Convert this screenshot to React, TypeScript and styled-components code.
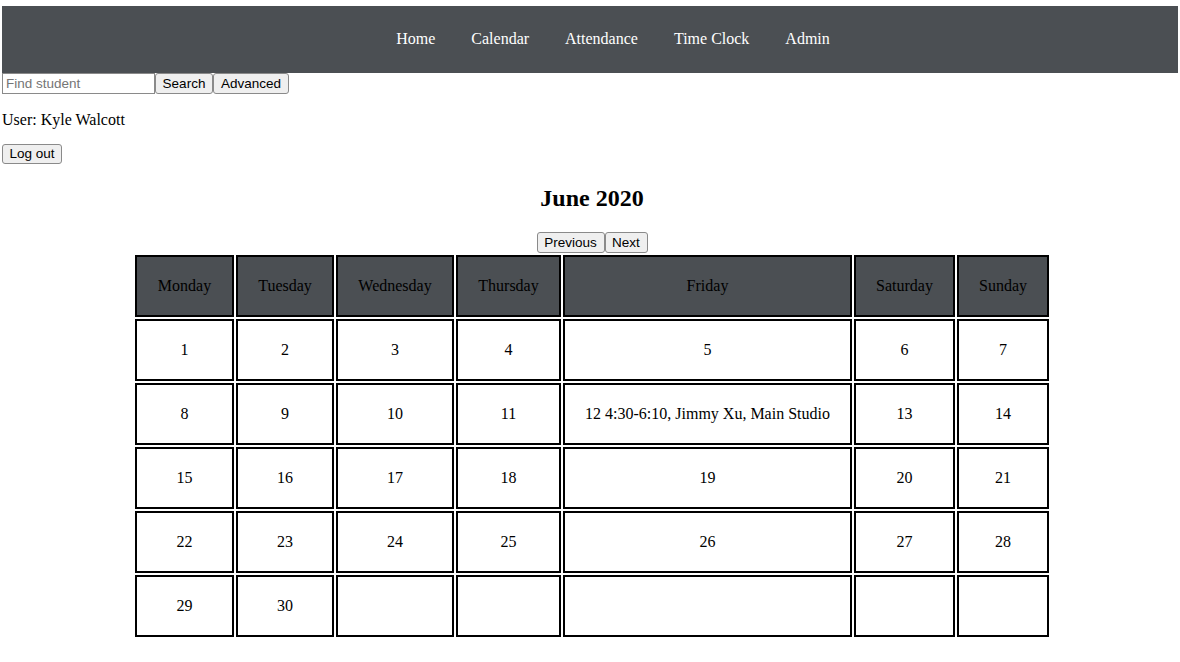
import React from "react";
import styled, { createGlobalStyle } from "styled-components";

const Global = createGlobalStyle`
  html, body { margin: 0; padding: 0; background: #fff; }
  body {
    padding: 6px 2px 0 2px;
    font-family: "Liberation Serif", "Times New Roman", serif;
    font-size: 16px;
    color: #000;
  }
`;

const Nav = styled.nav`
  background: #4b4f53;
  height: 67px;
  box-sizing: border-box;
  padding-bottom: 2px;
  display: flex;
  align-items: center;
`;

const NavList = styled.ul`
  list-style: none;
  margin: 0;
  padding: 0 0 0 46px;
  width: 100%;
  display: flex;
  justify-content: center;
`;

const NavItem = styled.li`
  padding: 0 18px;
  color: #fff;
  font-size: 16px;
  line-height: 18px;
`;

const SearchRow = styled.div`
  display: flex;
  height: 21px;
`;

const Field = styled.input`
  box-sizing: border-box;
  width: 153px;
  height: 21px;
  margin: 0;
  padding: 1px 3px;
  border: 1px solid #8a8a8a;
  border-radius: 0;
  font-family: "Liberation Sans", Arial, sans-serif;
  font-size: 13.5px;
  color: #000;
  &::placeholder { color: #757575; }
`;

const Btn = styled.button<{ $w: number; $h?: number }>`
  box-sizing: border-box;
  width: ${(p) => p.$w}px;
  height: ${(p) => p.$h ?? 21}px;
  margin: 0;
  padding: 0 5px;
  background: #efefef;
  border: 1px solid #8a8a8a;
  border-radius: 3px;
  font-family: "Liberation Sans", Arial, sans-serif;
  font-size: 13.5px;
  color: #000;
  line-height: 1;
`;

const UserLine = styled.p`
  margin: 16px 0 15px;
  line-height: 19px;
`;

const LogoutWrap = styled.div`
  height: 20px;
  display: flex;
`;

const Main = styled.section`
  padding-left: 4px;
`;

const Title = styled.h2`
  margin: 20px 0;
  padding-top: 1px;
  font-size: 24px;
  line-height: 27px;
  font-weight: bold;
  text-align: center;
`;

const Pager = styled.div`
  display: flex;
  justify-content: center;
  height: 21px;
`;

const Grid = styled.div`
  width: 914px;
  margin: 0 auto;
  padding: 2px;
  display: grid;
  grid-template-columns: 99px 98px 118px 105px 289px 101px 92px;
  grid-auto-rows: 62px;
  gap: 2px;
`;

const Cell = styled.div<{ $head?: boolean }>`
  box-sizing: border-box;
  border: 2px solid #000;
  background: ${(p) => (p.$head ? "#4b4f53" : "#fff")};
  display: flex;
  align-items: center;
  justify-content: center;
  text-align: center;
  font-size: 16px;
  color: #000;
  white-space: nowrap;
`;

const days = ["Monday", "Tuesday", "Wednesday", "Thursday", "Friday", "Saturday", "Sunday"];

const cells: string[] = [];
for (let i = 1; i <= 35; i++) {
  if (i === 12) cells.push("12 4:30-6:10, Jimmy Xu, Main Studio");
  else if (i <= 30) cells.push(String(i));
  else cells.push("");
}

export default function App() {
  return (
    <>
      <Global />
      <Nav>
        <NavList>
          {["Home", "Calendar", "Attendance", "Time Clock", "Admin"].map((l) => (
            <NavItem key={l}>{l}</NavItem>
          ))}
        </NavList>
      </Nav>
      <SearchRow>
        <Field placeholder="Find student" />
        <Btn $w={58}>Search</Btn>
        <Btn $w={76}>Advanced</Btn>
      </SearchRow>
      <UserLine>User: Kyle Walcott</UserLine>
      <LogoutWrap>
        <Btn $w={60} $h={20}>Log out</Btn>
      </LogoutWrap>
      <Main>
        <Title>June 2020</Title>
        <Pager>
          <Btn $w={68}>Previous</Btn>
          <Btn $w={43}>Next</Btn>
        </Pager>
        <Grid>
          {days.map((d) => (
            <Cell key={d} $head>{d}</Cell>
          ))}
          {cells.map((c, i) => (
            <Cell key={i}>{c}</Cell>
          ))}
        </Grid>
      </Main>
    </>
  );
}
